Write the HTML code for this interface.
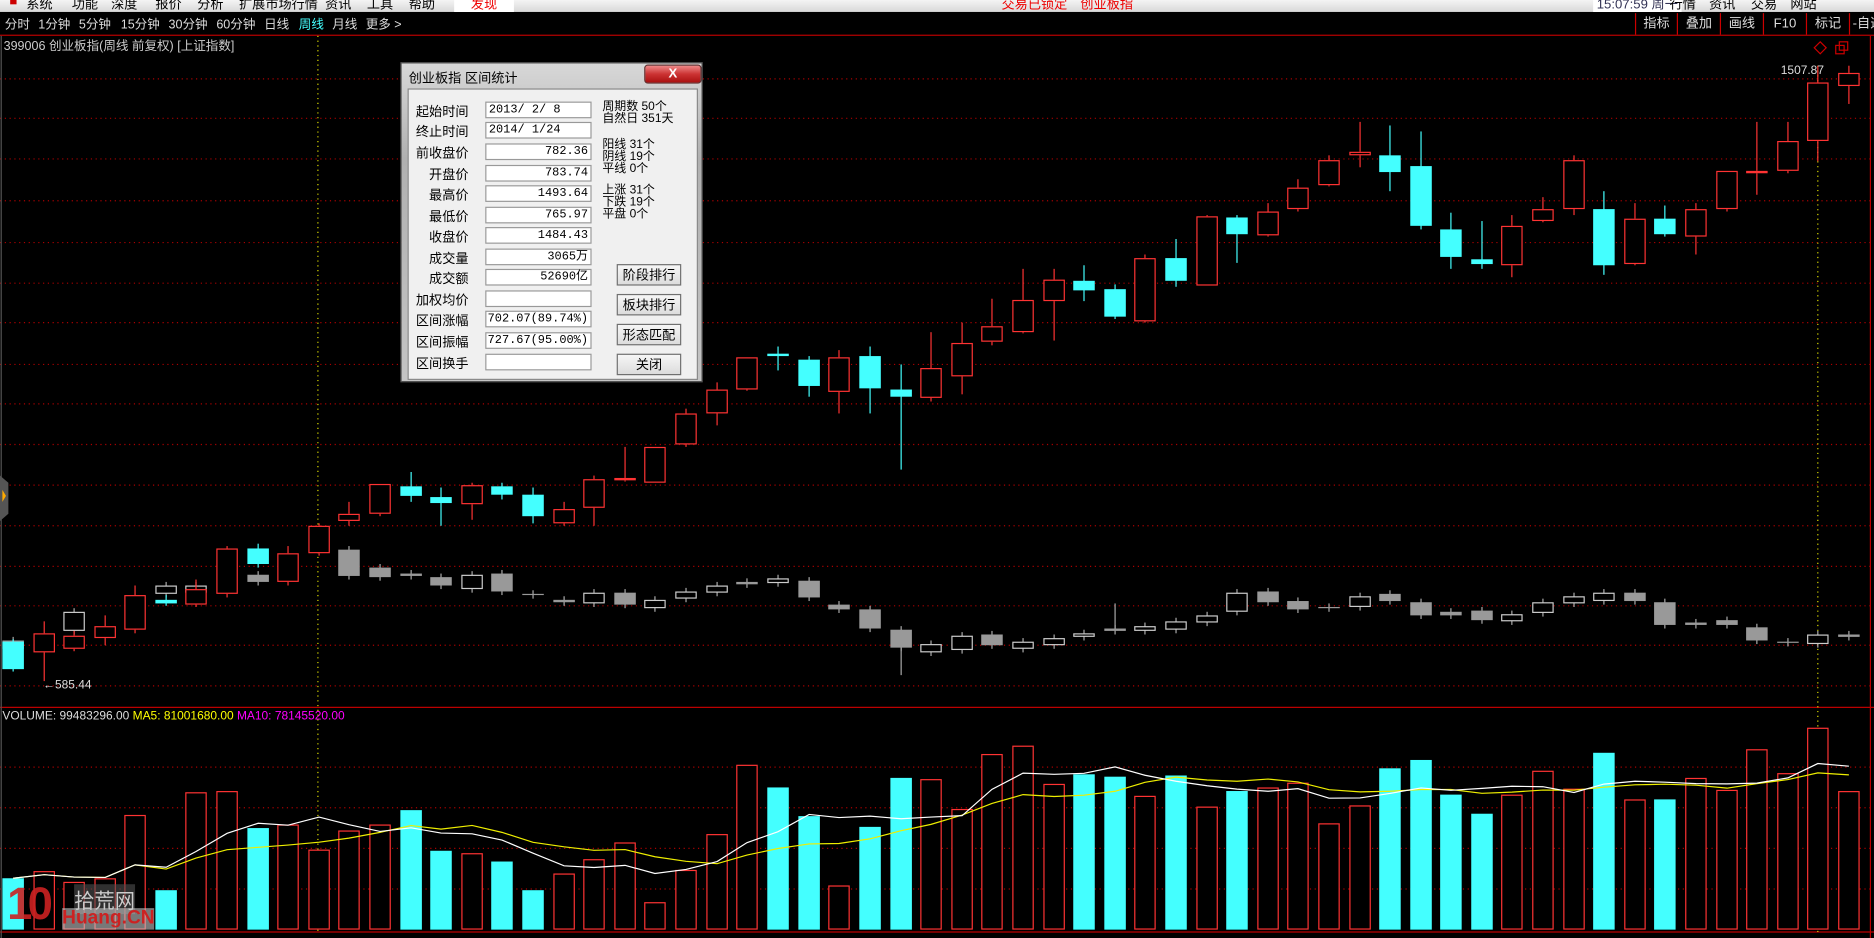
<!DOCTYPE html>
<html><head><meta charset="utf-8">
<style>
html,body{margin:0;padding:0;background:#000;overflow:hidden;width:1874px;height:938px}
#w{position:absolute;left:0;top:0;width:1568px;height:785px;transform:scale(1.19515,1.1949);transform-origin:0 0;background:#000;font-family:"Liberation Sans","Noto Sans CJK SC",sans-serif}
.a{position:absolute;white-space:nowrap}
#menu{position:absolute;left:0;top:0;width:1568px;height:10px;background:linear-gradient(#f4f4f4,#d8d8d8);overflow:hidden}
#menu span{position:absolute;top:-5px;font-size:11px;color:#000}
#tb span{position:absolute;top:13px;font-size:10.5px;color:#ddd}
.rb{position:absolute;top:11px;height:18px;border-left:1px solid #c00;font-size:11px;color:#ddd;text-align:center;line-height:18px}
#dlg{position:absolute;left:335px;top:52px;width:253px;height:268px;background:linear-gradient(#d8d8d8,#b0b0b0 30%,#c4c4c4);border:1px solid #555;box-sizing:border-box}
#dlg .body{position:absolute;left:5px;top:21px;width:241px;height:242px;background:#f0f0f0;border:1px solid #888}
.lb{position:absolute;right:191px;font-size:11px;color:#000}
.in{position:absolute;left:64px;width:89px;height:14px;background:#fff;border:1px solid #999;font-size:10px;font-family:"Liberation Mono","Noto Sans CJK SC",monospace;text-align:right;line-height:14px;padding-right:2px;box-sizing:border-box}
.rt{position:absolute;left:162px;font-size:10px;line-height:10px;color:#000}
.bt{position:absolute;left:174px;width:54px;height:18px;border:1px solid #707070;background:linear-gradient(#f6f6f6,#dcdcdc);font-size:11px;text-align:center;line-height:18px;box-sizing:border-box}
</style></head><body>
<div id="w">
<div id="menu">
<span style="left:8px;color:#c00">■</span><span style="left:22px">系统</span><span style="left:60px">功能</span><span style="left:93px">深度</span><span style="left:130px">报价</span><span style="left:165px">分析</span><span style="left:200px">扩展市场行情</span><span style="left:272px">资讯</span><span style="left:307px">工具</span><span style="left:342px">帮助</span>
<span style="left:380px;color:#e00;background:#fff;padding:0 14px">发现</span>
<span style="left:838px;color:#e00">交易已锁定　创业板指</span>
<span style="left:1333px;background:#fff;color:#335;padding:0 3px">15:07:59 周一</span>
<span style="left:1397px">行情</span><span style="left:1430px">资讯</span><span style="left:1465px">交易</span><span style="left:1498px">网站</span>
</div>
<div id="tb">
<span style="left:4px">分时</span><span style="left:32px">1分钟</span><span style="left:66px">5分钟</span><span style="left:101px">15分钟</span><span style="left:141px">30分钟</span><span style="left:181px">60分钟</span><span style="left:221px">日线</span><span style="left:250px;color:#4ff">周线</span><span style="left:278px">月线</span><span style="left:306px">更多 &gt;</span>
</div>
<div class="rb" style="left:1368px;width:34px">指标</div><div class="rb" style="left:1403px;width:35px">叠加</div><div class="rb" style="left:1439px;width:35px">画线</div><div class="rb" style="left:1475px;width:35px">F10</div><div class="rb" style="left:1511px;width:35px">标记</div><div class="rb" style="left:1547px;width:30px">-自选</div>
<div class="a" style="left:0;top:29px;width:1568px;height:1px;background:#b00"></div>
<div class="a" style="left:3px;top:31px;font-size:10.5px;color:#ccc">399006 创业板指(周线 前复权) [上证指数]</div>
<svg id="s" class="a" style="left:0;top:0" width="1568" height="785"></svg>
<div class="a" style="left:2px;top:594px;font-size:10px;color:#ddd">VOLUME: 99483296.00 <span style="color:#ff0">MA5: 81001680.00</span> <span style="color:#f0f">MA10: 78145520.00</span></div>
<div class="a" style="left:1490px;top:54px;font-size:10px;color:#ddd">1507.87</div>
<div class="a" style="left:36px;top:568px;font-size:10px;color:#ddd">←585.44</div>
<div class="a" style="left:6px;top:736px;font-size:38px;font-weight:bold;color:#c22;opacity:.9;letter-spacing:-4px">10</div>
<div class="a" style="left:62px;top:740px;font-size:17px;color:#ccc;background:rgba(80,80,80,.6)">拾荒网</div>
<div class="a" style="left:52px;top:760px;font-size:16px;font-weight:bold;color:#c22;background:rgba(200,200,200,.6)">Huang.CN</div>
<div id="dlg">
<div class="a" style="left:6px;top:4px;font-size:11px;color:#000">创业板指 区间统计</div>
<div class="a" style="left:203px;top:1px;width:46px;height:14px;background:linear-gradient(#e88,#c33 50%,#a11);border:1px solid #633;border-radius:3px;color:#fff;font-size:11px;font-weight:bold;text-align:center;line-height:14px">X</div>
<div class="body">
<div class="lb" style="top:10px">起始时间</div><div class="in" style="top:10px;text-align:left;padding-left:2px">2013/ 2/ 8</div>
<div class="lb" style="top:27px">终止时间</div><div class="in" style="top:27px;text-align:left;padding-left:2px">2014/ 1/24</div>
<div class="lb" style="top:45px">前收盘价</div><div class="in" style="top:45px">782.36</div>
<div class="lb" style="top:63px">开盘价</div><div class="in" style="top:63px">783.74</div>
<div class="lb" style="top:80px">最高价</div><div class="in" style="top:80px">1493.64</div>
<div class="lb" style="top:98px">最低价</div><div class="in" style="top:98px">765.97</div>
<div class="lb" style="top:115px">收盘价</div><div class="in" style="top:115px">1484.43</div>
<div class="lb" style="top:133px">成交量</div><div class="in" style="top:133px">3065万</div>
<div class="lb" style="top:150px">成交额</div><div class="in" style="top:150px">52690亿</div>
<div class="lb" style="top:168px">加权均价</div><div class="in" style="top:168px"></div>
<div class="lb" style="top:185px">区间涨幅</div><div class="in" style="top:185px">702.07(89.74%)</div>
<div class="lb" style="top:203px">区间振幅</div><div class="in" style="top:203px">727.67(95.00%)</div>
<div class="lb" style="top:221px">区间换手</div><div class="in" style="top:221px"></div>
<div class="rt" style="top:10px">周期数 50个<br>自然日 351天</div>
<div class="rt" style="top:42px">阳线 31个<br>阴线 19个<br>平线 0个</div>
<div class="rt" style="top:80px">上涨 31个<br>下跌 19个<br>平盘 0个</div>
<div class="bt" style="top:146px">阶段排行</div>
<div class="bt" style="top:171px">板块排行</div>
<div class="bt" style="top:196px">形态匹配</div>
<div class="bt" style="top:221px">关闭</div>
</div>
</div>
</div>
<script>
var S=document.getElementById('s'),h='';
function L(x1,y1,x2,y2,c,d,w){h+='<line x1="'+x1+'" y1="'+y1+'" x2="'+x2+'" y2="'+y2+'" stroke="'+c+'" stroke-width="'+(w||1)+'"'+(d?' stroke-dasharray="'+d+'"':'')+'/>';}
function R(x,y,w,hh,f,s){h+='<rect x="'+x+'" y="'+y+'" width="'+w+'" height="'+Math.max(hh,1)+'" fill="'+f+'"'+(s?' stroke="'+s+'"':'')+'/>';}
[66,99,133,168,203,237,270,305,338,372,406,440,474,507,540,574].forEach(function(y){L(0,y,1565,y,'#a00','1 3');});
[642,676,710,744].forEach(function(y){L(0,y,1565,y,'#a00','1 3');});
L(0,592,1568,592,'#b00');L(0,780,1568,780,'#b00');L(1565,30,1565,785,'#b00');L(1,30,1,785,'#555');
L(266,30,266,780,'#dd0','1 3');L(1521,55,1521,780,'#dd0','1 3');
var m=[[11,'c',537,560,535,562],[37,'r',530,546,520,570],[62,'r',532,543,528,545],[88,'r',524,534,515,540],[113,'r',498,527,490,530],[139,'c',502,505,498,507],[164,'r',493,506,485,508],[190,'r',459,497,457,500],[216,'c',459,472,455,475],[241,'r',463,487,457,490],[267,'r',440,463,438,465],[292,'r',430,436,420,440],[318,'r',405,430,405,432],[344,'c',407,415,395,420],[369,'c',416,421,408,440],[395,'r',406,422,404,435],[420,'c',407,414,404,418],[446,'c',414,432,408,438],[472,'r',426,438,420,440],[497,'r',401,425,398,440],[523,'r',400,402,374,403],[548,'r',374,404,374,404],[574,'r',346,372,342,374],[600,'r',326,346,320,356],[625,'r',299,326,299,327],[651,'c',296,298,290,310],[677,'c',301,323,298,332],[702,'r',299,328,293,346],[728,'c',298,325,290,346],[754,'c',326,332,305,393],[779,'r',308,333,278,336],[805,'r',287,315,270,330],[830,'r',273,286,250,289],[856,'r',251,278,225,279],[882,'r',234,252,225,285],[907,'c',235,243,222,252],[933,'c',242,265,238,267],[958,'r',216,269,213,270],[984,'c',216,235,200,240],[1010,'r',181,239,180,239],[1035,'c',182,196,180,220],[1061,'r',177,197,170,198],[1086,'r',157,175,150,177],[1112,'r',134,155,130,156],[1138,'r',127,130,102,140],[1163,'c',130,144,105,160],[1189,'c',139,189,110,192],[1214,'c',192,215,178,225],[1240,'c',217,221,185,225],[1265,'r',189,222,180,232],[1291,'r',175,185,165,186],[1317,'r',134,175,130,180],[1342,'c',175,222,160,230],[1368,'r',183,221,170,222],[1393,'c',183,196,172,198],[1419,'r',175,198,170,213],[1445,'r',143,175,143,177],[1470,'r',143,145,102,163],[1496,'r',118,143,102,145],[1521,'r',69,118,55,135],[1547,'r',61,72,55,87]];
var o=[[11,'g',536,543],[62,'w',512,528],[139,'w',490,497],[164,'w',490,496],[216,'g',481,487],[292,'g',460,482],[318,'g',475,483],[344,'g',480,482],[369,'g',483,490],[395,'w',481,493],[420,'g',480,495],[446,'g',497,498],[472,'g',502,504],[497,'w',496,505],[523,'g',496,506],[548,'w',502,509],[574,'w',495,501],[600,'w',490,496],[625,'g',487,489],[651,'w',484,488],[677,'g',486,500],[702,'g',506,510],[728,'g',510,526],[754,'g',527,542,565],[779,'w',539,546],[805,'w',532,544],[830,'g',531,540],[856,'w',537,543],[882,'w',534,540],[907,'w',530,533],[933,'g',526,528,505],[958,'w',524,528],[984,'w',520,527],[1010,'w',515,521],[1035,'w',496,512],[1061,'g',495,504],[1086,'g',503,510],[1112,'g',508,509],[1138,'w',499,508],[1163,'g',497,503],[1189,'g',504,515],[1214,'g',512,515],[1240,'g',511,519],[1265,'w',514,520],[1291,'w',504,513],[1317,'w',499,505],[1342,'w',496,503],[1368,'g',496,503],[1393,'g',504,523],[1419,'g',521,523],[1445,'g',519,523],[1470,'g',525,536],[1496,'g',537,538],[1521,'w',531,539],[1547,'g',531,533]];
o.forEach(function(c){var x=c[0];if(c[4]){L(x,Math.min(c[4],c[2]),x,Math.max(c[4],c[3]),'#aaa');}L(x,c[2]-3,x,c[3]+3,'#aaa');if(c[1]=='g')R(x-9,c[2],18,c[3]-c[2],'#999');else R(x-8.5,c[2]+.5,17,c[3]-c[2]-1,'#000','#ccc');});
m.forEach(function(c){var x=c[0];if(c[1]=='c'){L(x,c[4],x,c[5],'#4ff');R(x-9,c[2],18,c[3]-c[2],'#4ff');}else{L(x,c[4],x,c[2],'#f33');L(x,c[3],x,c[5],'#f33');R(x-8.5,c[2]+.5,17,c[3]-c[2]-1,'#000','#f33');}});
var v=[735,729,738,735,682,745,663,662,693,690,711,695,690,678,712,714,721,745,731,719,705,755,728,698,640,659,683,741,692,651,652,677,631,624,656,648,650,666,649,675,662,659,655,689,674,643,636,665,681,665,645,660,630,669,669,651,661,627,647,609,662];
var B=778;
v.forEach(function(t,i){var x=m[i][0];if(m[i][1]=='c')R(x-9,t,18,B-t,'#4ff');else R(x-8.5,t+.5,17,B-t-1,'#000','#f33');});
function ma(n,col){var p='';for(var i=0;i<v.length;i++){var k=Math.min(n,i+1),s=0;for(var j=i-k+1;j<=i;j++)s+=B-v[j];var y=B-s/k;p+=(i?'L':'M')+m[i][0]+' '+y.toFixed(1);}h+='<path d="'+p+'" fill="none" stroke="'+col+'"/>';}
ma(10,'#ee0');ma(5,'#fff');
h+='<path d="M1518 40 L1523 35 L1528 40 L1523 45Z" fill="none" stroke="#c00"/><rect x="1536" y="38" width="7" height="7" fill="none" stroke="#c00"/><rect x="1539" y="35" width="7" height="7" fill="none" stroke="#c00"/>';
h+='<path d="M0 398 L7 404 L7 430 L0 436Z" fill="#555"/><path d="M2 410 L5 415 L2 420Z" fill="#fa0"/>';
S.innerHTML=h;
</script>
</body></html>
